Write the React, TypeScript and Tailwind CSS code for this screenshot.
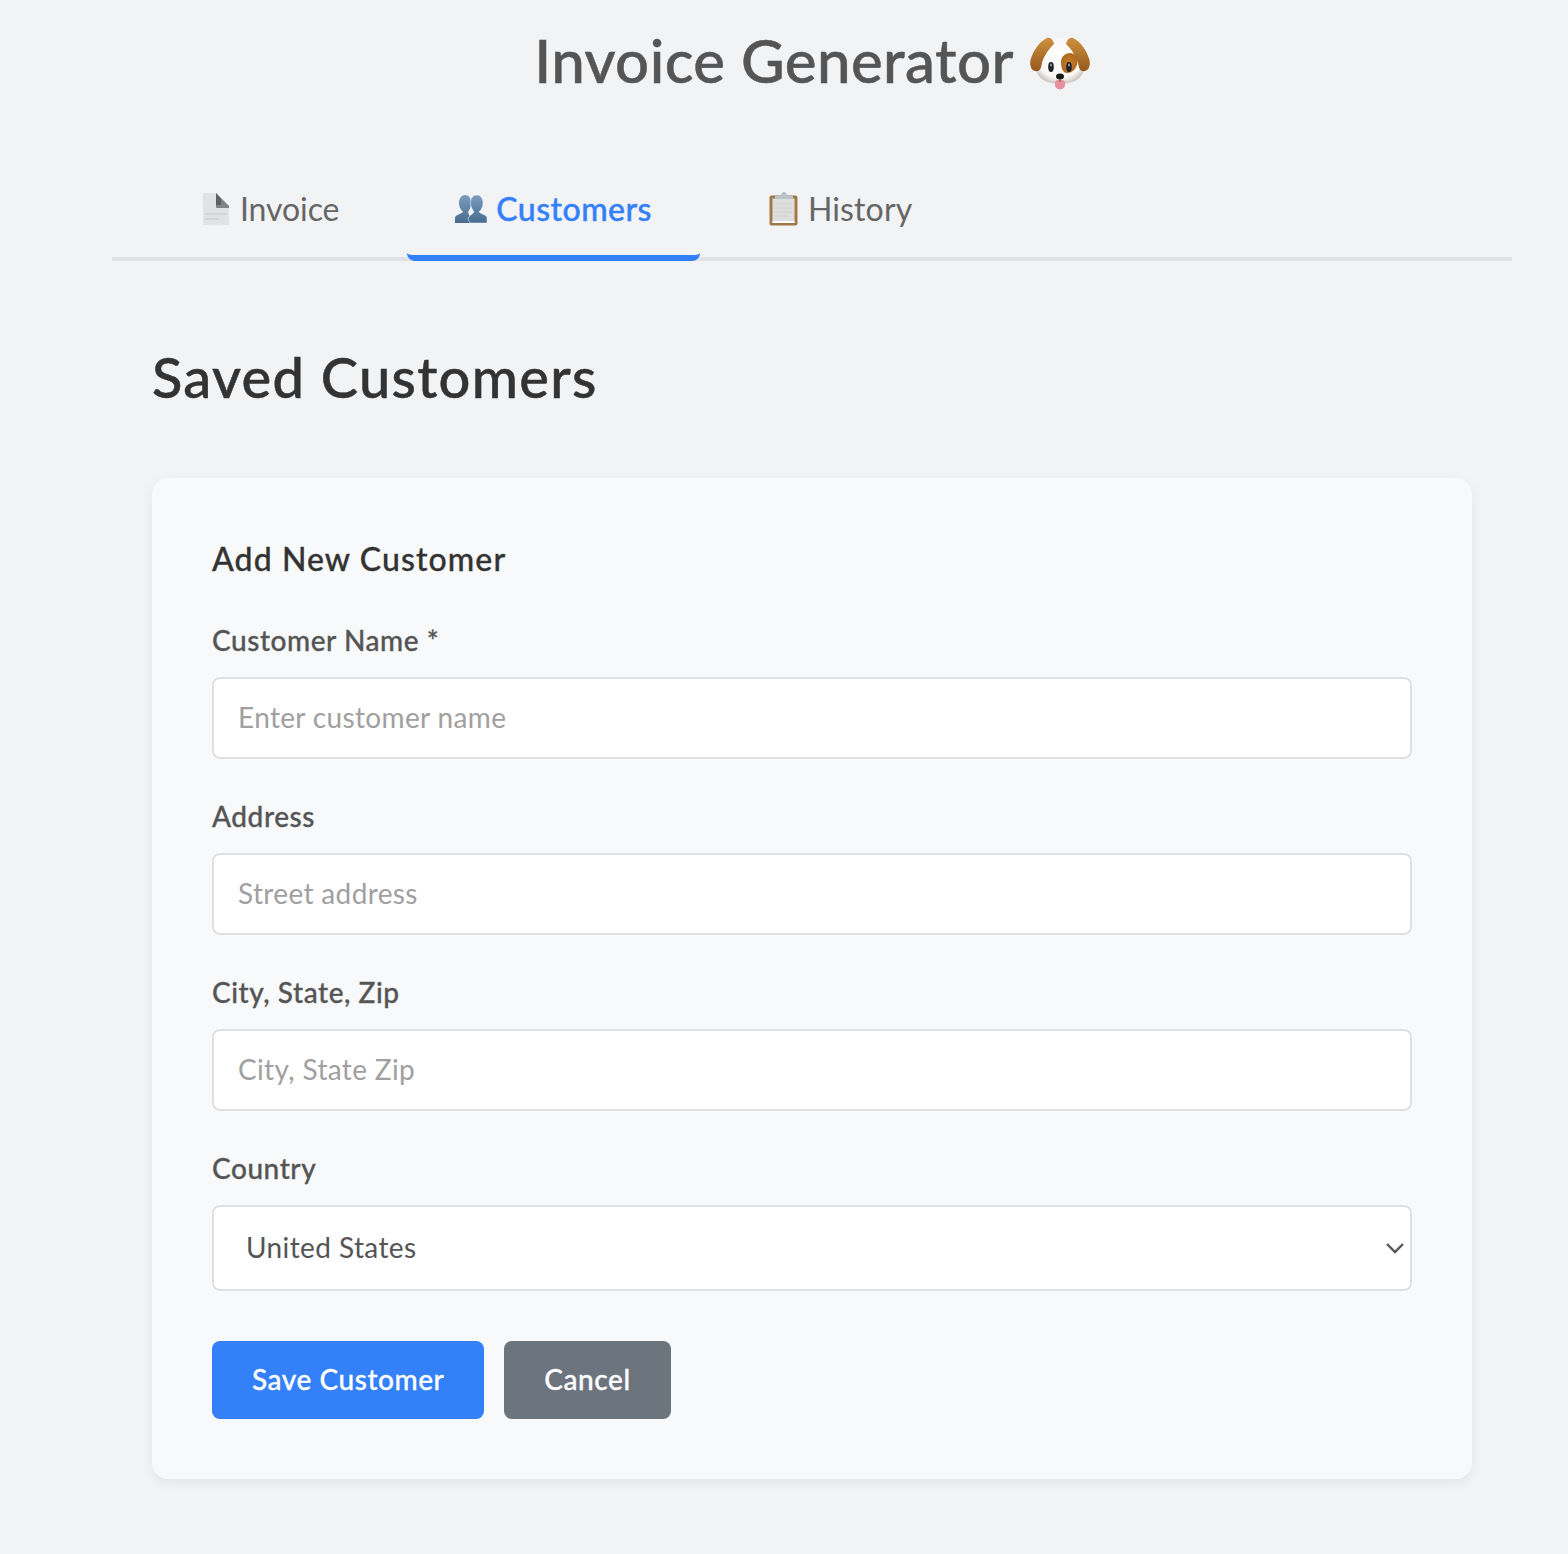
import React from 'react';

const font = "font-['Lato','Noto_Sans',sans-serif]";
const labelClass = "block mb-[18px] text-[28px] leading-[37px] font-medium tracking-[0.55px] text-[#555555] [-webkit-text-stroke:0.3px]";
const buttonClass = "h-[78px] px-10 pb-[2px] rounded-lg text-white text-[28px] font-medium tracking-[0.55px] [-webkit-text-stroke:0.3px]";

const DogIcon = () => (
  <svg width="60" height="54" viewBox="0 0 60 54" className="shrink-0 mt-[7px]">
    <defs>
      <radialGradient id="dogFace" cx="50%" cy="42%" r="60%">
        <stop offset="0%" stopColor="#ffffff" />
        <stop offset="75%" stopColor="#faf8f6" />
        <stop offset="100%" stopColor="#c9c2bc" />
      </radialGradient>
      <linearGradient id="dogEar" x1="0" y1="0" x2="0" y2="1">
        <stop offset="0%" stopColor="#cf9040" />
        <stop offset="100%" stopColor="#94591c" />
      </linearGradient>
      <radialGradient id="dogPatch" cx="50%" cy="50%" r="60%">
        <stop offset="0%" stopColor="#c67f2a" />
        <stop offset="100%" stopColor="#a9651f" />
      </radialGradient>
    </defs>
    <path d="M30 1C21 1 15 6 11 14C7 21 5 27 6 33C8 42 18 47 30 47C42 47 52 42 54 33C55 27 53 21 49 14C45 6 39 1 30 1Z" fill="url(#dogFace)" />
    <path d="M31 25C31 20 35 16 40 16C45 16 48 20 47.5 25C47 31 43 36 37 36C33 36 31 31 31 25Z" fill="url(#dogPatch)" />
    <path d="M17 1C9 5 3 14 0.5 23C-0.5 28 1 33 5 34C9 35 11 32 11.5 28C12 24 14 20 16 17C18 13 21 10 24 7C23 2 20 0 17 1Z" fill="url(#dogEar)" />
    <path d="M43 1C51 5 57 14 59.5 23C60.5 28 59 33 55 34C51 35 49 32 48.5 28C48 24 46 20 44 17C42 13 39 10 36 7C37 2 40 0 43 1Z" fill="url(#dogEar)" />
    <ellipse cx="21" cy="30" rx="2.8" ry="5" fill="#1f2226" />
    <ellipse cx="39" cy="30" rx="2.8" ry="5" fill="#1f2226" />
    <ellipse cx="21" cy="28" rx="1.1" ry="1.6" fill="#8d9499" />
    <ellipse cx="39" cy="28" rx="1.1" ry="1.6" fill="#8d9499" />
    <path d="M25 45C25 42 35 42 35 45L35 47.5C35 54 25 54 25 47.5Z" fill="#e8919f" />
    <ellipse cx="30" cy="39.5" rx="4" ry="3" fill="#17181a" />
    <path d="M30 42V45" stroke="#555" strokeWidth="1" />
  </svg>
);

const PageIcon = () => (
  <svg width="28" height="32" viewBox="0 0 28 32" className="shrink-0">
    <path d="M1 0H14L27 13V32H1Z" fill="#e1e2e4" />
    <path d="M3 21H25M3 26H17" stroke="#d0d1d4" strokeWidth="1.5" />
    <path d="M14 0L27 13V15H15C14.5 15 14 14.5 14 14Z" fill="#818386" />
    <path d="M14 0L19 6V12H14Z" fill="#5e6063" />
  </svg>
);

const BustsIcon = () => (
  <svg width="32" height="28" viewBox="0 0 32 28" className="shrink-0">
    <defs>
      <linearGradient id="bust" x1="0" y1="0" x2="0" y2="1">
        <stop offset="0%" stopColor="#7b9dbd" />
        <stop offset="100%" stopColor="#476c90" />
      </linearGradient>
    </defs>
    <path d="M0 28V23C0 20 6 19 8 17C5 14 4 11 4 8C4 3 7 0 10 0C14 0 16 3 16 8C16 11 15 14 13 17L17 28Z" fill="url(#bust)" />
    <path d="M32 28V23C32 20 26 19 24 17C27 14 28 11 28 8C28 3 25 0 22 0C18 0 15.5 3 15.5 8C15.5 11 17 14 19 17C17 20 13 21 13 24L15 28Z" fill="url(#bust)" stroke="#dbe5ee" strokeWidth="0.6" />
  </svg>
);

const ClipboardIcon = () => (
  <svg width="30" height="34" viewBox="0 0 30 34" className="shrink-0">
    <rect x="1.5" y="3.5" width="28" height="30" rx="2" fill="#a07a46" />
    <rect x="4.5" y="6.5" width="22" height="24" fill="#dedede" />
    <rect x="4.5" y="29" width="22" height="2" fill="#ffffff" />
    <path d="M7 12H24M7 16H24M7 20H24M7 24H20" stroke="#d3d3d3" strokeWidth="1.5" />
    <path d="M7 7V4H13C13 1 14.5 0 16 0C17.5 0 19 1 19 4H25V7Z" fill="#b9c3cc" />
  </svg>
);

const tabs = [
  { label: 'Invoice', icon: <PageIcon />, gap: 'gap-[10px] tracking-[-0.1px]', active: false },
  { label: 'Customers', icon: <BustsIcon />, gap: 'gap-[9px] tracking-[0.45px]', active: true },
  { label: 'History', icon: <ClipboardIcon />, gap: 'gap-[10px] tracking-[0.15px]', active: false },
];

const fields = [
  { label: 'Customer Name *', placeholder: 'Enter customer name' },
  { label: 'Address', placeholder: 'Street address' },
  { label: 'City, State, Zip', placeholder: 'City, State Zip' },
];

export default function App() {
  return (
    <div className={`min-h-[1554px] bg-[#f2f3f5] ${font}`}>
      <div className="ml-[112px] w-[1400px]">
        {/* Title */}
        <h1 className="pt-4 h-[104px] flex items-center justify-center gap-4 text-[60px] leading-[84px] font-medium tracking-[0.4px] text-[#555555] [-webkit-text-stroke:0.5px]">
          Invoice Generator
          <DogIcon />
        </h1>

        {/* Tabs */}
        <div className="mt-[59px] flex gap-5 pl-[42px] border-b-4 border-[#e0e2e6] h-[98px]">
          {tabs.map((t) => (
            <button
              key={t.label}
              className={`h-[98px] shrink-0 px-12 flex items-center rounded-lg border-b-[6px] text-[32px] ${t.gap} ${
                t.active ? 'border-[#3380f8] text-[#3380f8] font-medium [-webkit-text-stroke:0.4px]' : 'border-transparent text-[#666666]'
              }`}
            >
              {t.icon}
              {t.label}
            </button>
          ))}
        </div>

        <div className="px-10">
          <h2 className="mt-[76px] text-[56px] leading-[80px] font-medium tracking-[1.3px] text-[#333333] [-webkit-text-stroke:0.5px]">Saved Customers</h2>

          {/* Form card */}
          <div className="mt-[61px] bg-[#f8f9fa] rounded-2xl p-[60px] shadow-[0_4px_12px_rgba(0,0,0,0.06)]">
            <h3 className="text-[32px] leading-[42px] font-medium tracking-[1.1px] text-[#333333] [-webkit-text-stroke:0.3px]">Add New Customer</h3>

            <div className="mt-[42px] flex flex-col gap-[39px]">
              {fields.map((f) => (
                <div key={f.label}>
                  <label className={labelClass}>{f.label}</label>
                  <input
                    placeholder={f.placeholder}
                    className="block w-full h-[82px] px-6 pb-[2px] bg-white border-2 border-[#e0e0e0] rounded-lg text-[28px] tracking-[0.35px] outline-none placeholder:text-[#a0a0a0]"
                  />
                </div>
              ))}

              <div>
                <label className={labelClass}>Country</label>
                <div className="relative">
                  <select className="block w-full h-[86px] pl-8 pr-12 pb-[2px] bg-white border-2 border-[#e0e0e0] rounded-lg text-[28px] tracking-[0.4px] text-[#555555] outline-none appearance-none">
                    <option>United States</option>
                  </select>
                  <svg width="20" height="12" viewBox="0 0 20 12" className="absolute right-[7px] top-[37px] pointer-events-none">
                    <path d="M2 2L10 10L18 2" fill="none" stroke="#555555" strokeWidth="2.4" />
                  </svg>
                </div>
              </div>
            </div>

            <div className="mt-[50px] flex gap-5">
              <button className={`${buttonClass} bg-[#3380f8]`}>Save Customer</button>
              <button className={`${buttonClass} bg-[#6c757d]`}>Cancel</button>
            </div>
          </div>
        </div>
      </div>
    </div>
  );
}
